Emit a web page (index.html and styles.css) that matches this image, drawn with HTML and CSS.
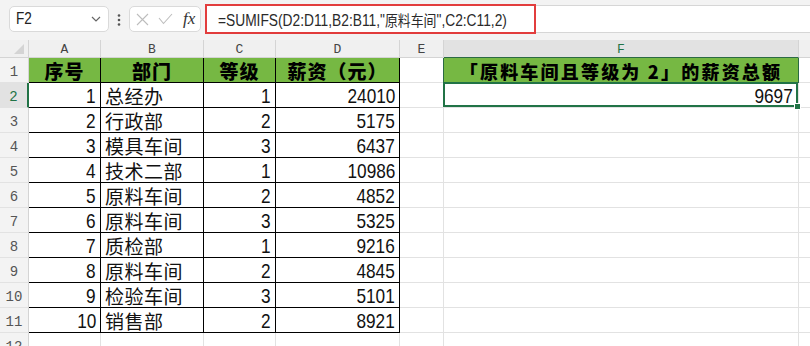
FILE: index.html
```html
<!DOCTYPE html>
<html lang="zh">
<head>
<meta charset="utf-8">
<link rel="stylesheet" href="styles.css">
</head>
<body>
<div class="app">
  <div class="toolbar">
    <div class="namebox">
      <span class="nb-text">F2</span>
      <svg class="chev" width="10" height="6" viewBox="0 0 10 6"><path d="M1 1 L5 5 L9 1" fill="none" stroke="#666" stroke-width="1.2"/></svg>
    </div>
    <svg class="dots" width="4" height="14" viewBox="0 0 4 14"><circle cx="2" cy="2.5" r="1.3" fill="#555"/><circle cx="2" cy="7" r="1.3" fill="#555"/><circle cx="2" cy="11.5" r="1.3" fill="#555"/></svg>
    <div class="fxbox">
      <svg width="13" height="13" viewBox="0 0 13 13"><path d="M1 1 L12 12 M12 1 L1 12" stroke="#bdbdbd" stroke-width="1.1" fill="none"/></svg>
      <svg width="15" height="12" viewBox="0 0 15 12"><path d="M1 5 L5.5 10.5 L14 1" stroke="#bdbdbd" stroke-width="1.1" fill="none"/></svg>
      <span class="fx">fx</span>
    </div>
    <div class="formula">
      <span class="ftext">=SUMIFS(D2:D11,B2:B11,"<span class="fcjk">原料车间</span>",C2:C11,2)</span>
      <div class="mark"></div>
    </div>
  </div>
  <div class="sheet">
    <div class="c corner"><svg width="12" height="12" viewBox="0 0 12 12"><path d="M11 1 L11 11 L1 11 Z" fill="#d4d4d4"/></svg></div>
    <div class="c ch">A</div><div class="c ch">B</div><div class="c ch">C</div><div class="c ch">D</div><div class="c ch">E</div><div class="c ch sel">F</div><div class="c ch last"></div>

    <div class="c rh">1</div>
    <div class="c h k">序号</div><div class="c h k">部门</div><div class="c h k">等级</div><div class="c h k">薪资（元）</div>
    <div class="c e e1"></div><div class="c h f1">「原料车间且等级为 2」的薪资总额</div><div class="c g"></div>

    <div class="c rh rsel">2</div>
    <div class="c n k"><span>1</span></div><div class="c t k">总经办</div><div class="c n k"><span>1</span></div><div class="c n k"><span>24010</span></div>
    <div class="c e"></div><div class="c n f2"><span>9697</span></div><div class="c g"></div>

    <div class="c rh">3</div>
    <div class="c n k"><span>2</span></div><div class="c t k">行政部</div><div class="c n k"><span>2</span></div><div class="c n k"><span>5175</span></div>
    <div class="c e"></div><div class="c e"></div><div class="c g"></div>

    <div class="c rh">4</div>
    <div class="c n k"><span>3</span></div><div class="c t k">模具车间</div><div class="c n k"><span>3</span></div><div class="c n k"><span>6437</span></div>
    <div class="c e"></div><div class="c e"></div><div class="c g"></div>

    <div class="c rh">5</div>
    <div class="c n k"><span>4</span></div><div class="c t k">技术二部</div><div class="c n k"><span>1</span></div><div class="c n k"><span>10986</span></div>
    <div class="c e"></div><div class="c e"></div><div class="c g"></div>

    <div class="c rh">6</div>
    <div class="c n k"><span>5</span></div><div class="c t k">原料车间</div><div class="c n k"><span>2</span></div><div class="c n k"><span>4852</span></div>
    <div class="c e"></div><div class="c e"></div><div class="c g"></div>

    <div class="c rh">7</div>
    <div class="c n k"><span>6</span></div><div class="c t k">原料车间</div><div class="c n k"><span>3</span></div><div class="c n k"><span>5325</span></div>
    <div class="c e"></div><div class="c e"></div><div class="c g"></div>

    <div class="c rh">8</div>
    <div class="c n k"><span>7</span></div><div class="c t k">质检部</div><div class="c n k"><span>1</span></div><div class="c n k"><span>9216</span></div>
    <div class="c e"></div><div class="c e"></div><div class="c g"></div>

    <div class="c rh">9</div>
    <div class="c n k"><span>8</span></div><div class="c t k">原料车间</div><div class="c n k"><span>2</span></div><div class="c n k"><span>4845</span></div>
    <div class="c e"></div><div class="c e"></div><div class="c g"></div>

    <div class="c rh">10</div>
    <div class="c n k"><span>9</span></div><div class="c t k">检验车间</div><div class="c n k"><span>3</span></div><div class="c n k"><span>5101</span></div>
    <div class="c e"></div><div class="c e"></div><div class="c g"></div>

    <div class="c rh">11</div>
    <div class="c n k"><span>10</span></div><div class="c t k">销售部</div><div class="c n k"><span>2</span></div><div class="c n k"><span>8921</span></div>
    <div class="c e"></div><div class="c e"></div><div class="c g"></div>

    <div class="c rh">12</div>
    <div class="c e"></div><div class="c e"></div><div class="c e"></div><div class="c e"></div>
    <div class="c e"></div><div class="c e"></div><div class="c g"></div>
  </div>
</div>
</body>
</html>
```
FILE: styles.css
```css
html, body {
  margin: 0;
  padding: 0;
  background: #ffffff;
}
.app {
  width: 810px;
  height: 346px;
  overflow: hidden;
  font-family: "Noto Sans CJK SC", sans-serif;
}
.toolbar {
  height: 40px;
  background: #f3f3f3;
  display: flex;
  align-items: flex-start;
  box-sizing: border-box;
}
.namebox {
  margin: 6px 0 0 9px;
  width: 100px;
  height: 26px;
  box-sizing: border-box;
  background: #fff;
  border: 1px solid #dadada;
  border-radius: 5px;
  display: flex;
  align-items: center;
  justify-content: space-between;
  padding: 0 7px 0 6px;
}
.nb-text {
  display: inline-block;
  font-family: "Liberation Sans", sans-serif;
  font-size: 16px;
  color: #222;
  transform: scaleX(0.85);
  transform-origin: left center;
}
.dots {
  margin: 13px 0 0 8px;
}
.fxbox {
  margin: 6px 0 0 8px;
  width: 72px;
  height: 26px;
  box-sizing: border-box;
  background: #fff;
  border: 1px solid #dadada;
  border-radius: 5px;
  display: flex;
  align-items: center;
  gap: 9px;
  padding-left: 6px;
}
.fx {
  font-family: "Liberation Serif", serif;
  font-style: italic;
  font-size: 17px;
  color: #333;
  margin-left: 1px;
}
.formula {
  position: relative;
  flex: 1;
  margin: 5px 0 0 4px;
  height: 28px;
  box-sizing: border-box;
  background: #fff;
  border-top: 1px solid #d6d6d6;
  border-bottom: 1px solid #d6d6d6;
  border-left: 1px solid #d6d6d6;
  display: flex;
  align-items: center;
  padding-left: 12px;
}
.ftext {
  display: inline-block;
  font-family: "Liberation Sans", sans-serif;
  font-size: 16px;
  color: #2a2a2a;
  white-space: nowrap;
  transform: scaleX(0.86);
  transform-origin: left center;
}
.fcjk {
  font-family: "Noto Sans CJK SC", sans-serif;
  font-size: 15px;
}
.mark {
  position: absolute;
  left: -1px;
  top: -2px;
  width: 331px;
  height: 30px;
  box-sizing: border-box;
  border: 2px solid #e23d3d;
}
.sheet {
  display: grid;
  grid-template-columns: 29px 72px 103px 72px 124px 44px 355px 11px;
  grid-template-rows: 18px;
  grid-auto-rows: 25px;
}
.c {
  box-sizing: border-box;
  border-right: 1px solid #e2e2e2;
  border-bottom: 1px solid #e2e2e2;
  display: flex;
  align-items: flex-end;
  overflow: hidden;
  white-space: nowrap;
  color: #111;
}
.corner {
  background: #f0f0f0;
  border-right-color: #d4d4d4;
  border-bottom-color: #d4d4d4;
  justify-content: flex-end;
  padding: 0 3px 2px 0;
}
.ch {
  background: #f0f0f0;
  border-right-color: #d4d4d4;
  border-bottom-color: #d4d4d4;
  justify-content: center;
  align-items: center;
  font-family: "Liberation Mono", monospace;
  font-size: 13px;
  color: #444;
  padding-top: 1px;
}
.ch.sel {
  background: #e2e2e2;
  color: #217346;
  border-bottom-color: #2b6a44;
}
.ch.last {
  border-right: none;
}
.rh {
  background: #f3f3f3;
  border-right-color: #d4d4d4;
  border-bottom-color: #e2e2e2;
  justify-content: center;
  font-family: "Liberation Mono", monospace;
  font-size: 14px;
  line-height: 18px;
  color: #555;
  padding-bottom: 1px;
}
.rh.rsel {
  background: #e2e2e2;
  color: #217346;
  border-right: 2px solid #217346;
}
.k {
  border-right-color: #000;
  border-bottom-color: #000;
}
.h {
  background: #76b843;
  justify-content: center;
  font-weight: 900;
  font-size: 19px;
  line-height: 22px;
  letter-spacing: 1px;
  color: #000;
}
.f1 {
  font-size: 18px;
  letter-spacing: 2.2px;
  border-right-color: #2b6a44;
  border-bottom-color: #2b6a44;
}
.e1 {
  border-right-color: #2b6a44;
}
.n {
  justify-content: flex-end;
  padding-right: 4px;
  font-family: "Liberation Sans", sans-serif;
  font-size: 21px;
  line-height: 22px;
}
.n span {
  display: inline-block;
  transform: scaleX(0.82);
  transform-origin: right center;
}
.t {
  padding-left: 4px;
  font-size: 19px;
  line-height: 22px;
  letter-spacing: 0.5px;
}
.f2 {
  position: relative;
  overflow: visible;
  padding-right: 5px;
}
.f2::after {
  content: "";
  position: absolute;
  left: -1px;
  top: -1px;
  right: 0;
  bottom: 0;
  border: 2px solid #217346;
}
.f2::before {
  content: "";
  position: absolute;
  right: -3px;
  bottom: -3px;
  width: 5px;
  height: 5px;
  background: #217346;
  border: 1px solid #fff;
  z-index: 2;
}
.g {
  border-right: none;
}
```
